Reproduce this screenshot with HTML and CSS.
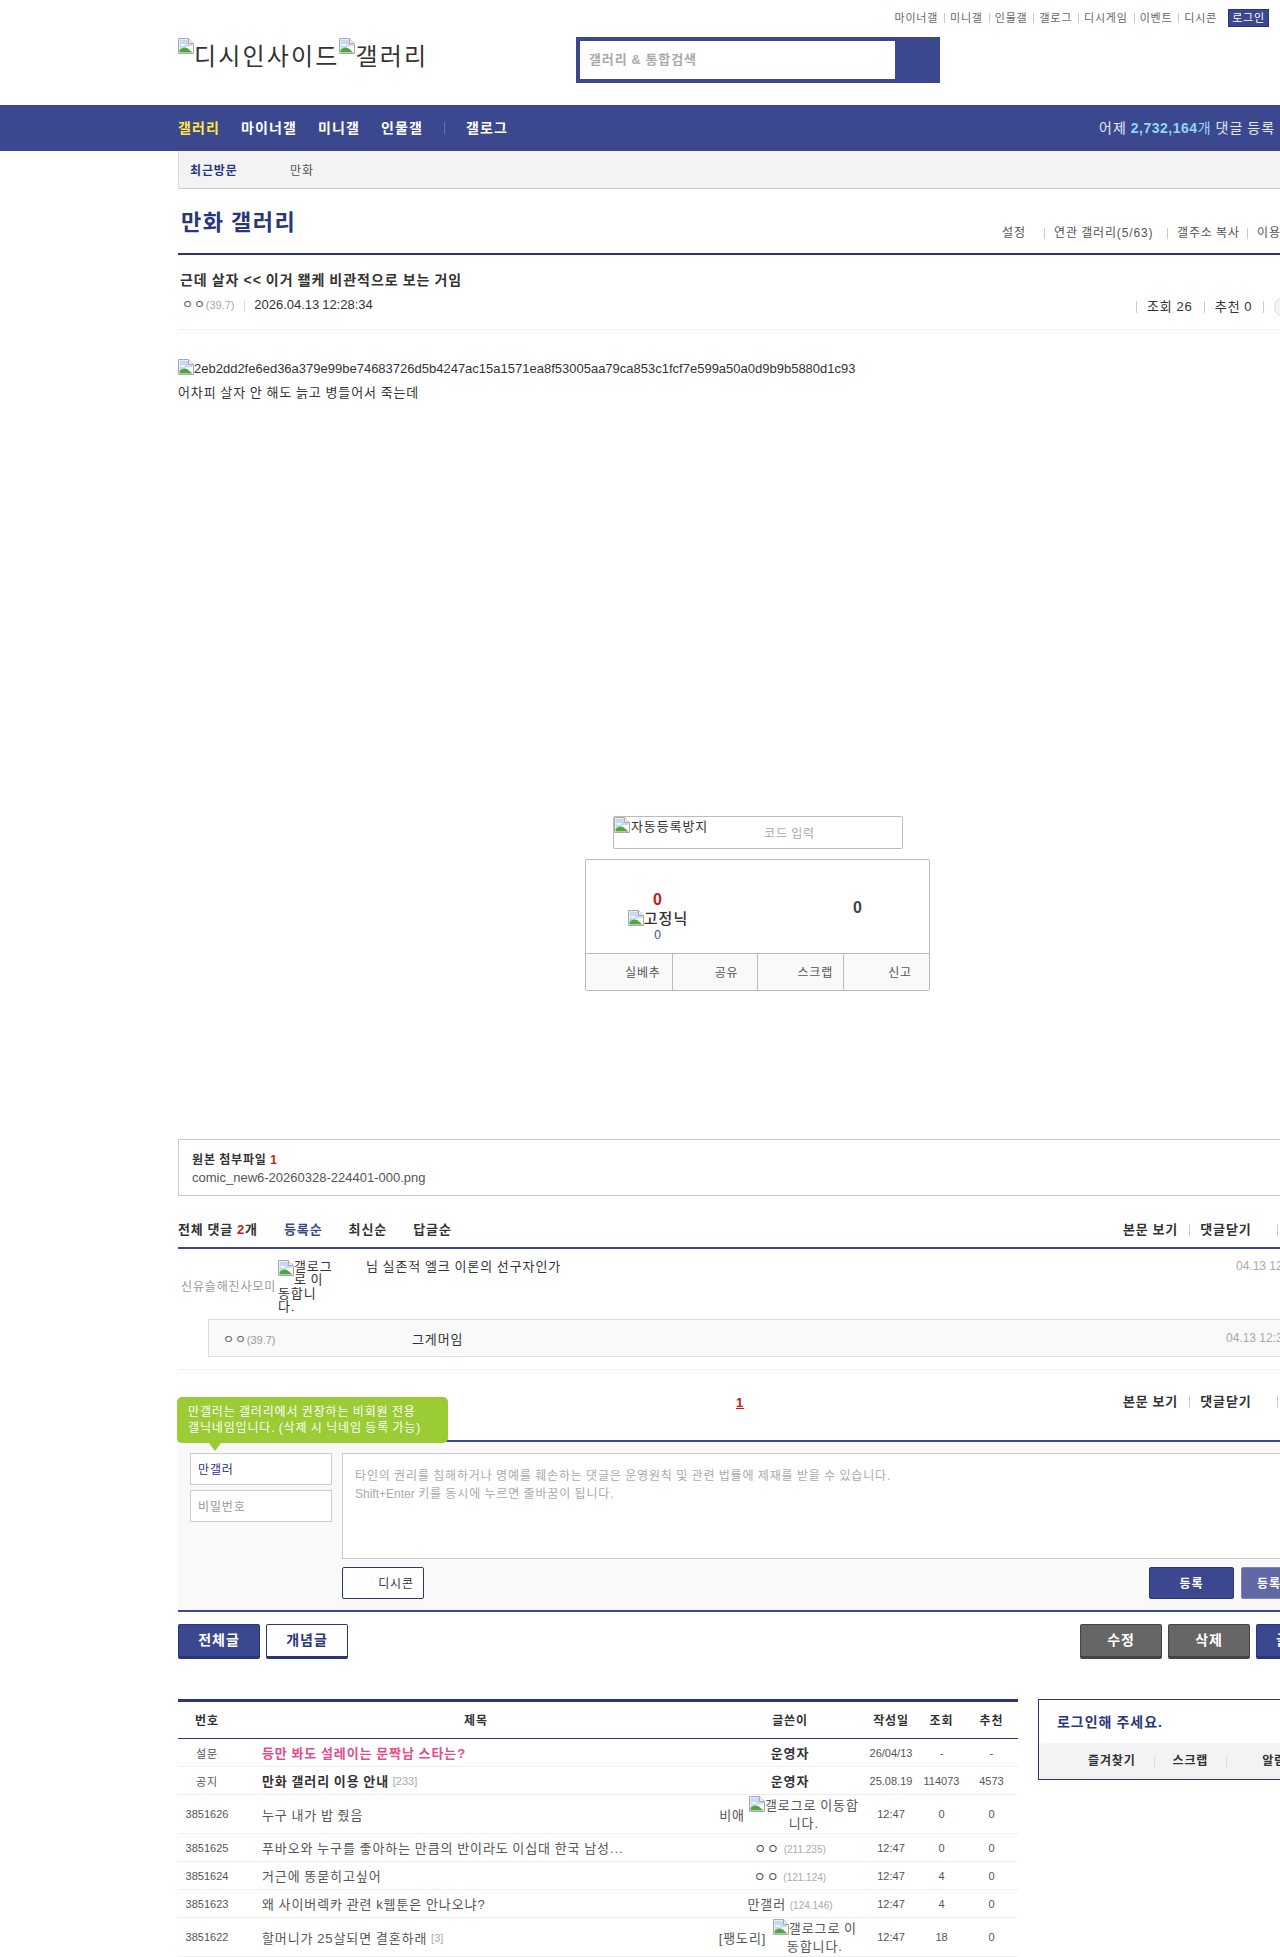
FILE: index.html
```html
<!DOCTYPE html>
<html lang="ko">
<head>
    <meta charset="UTF-8">
    <title>근데 살자 &lt;&lt; 이거 왤케 비관적으로 보는 거임 - 만화 갤러리</title>
    <link rel="stylesheet" href="styles.css">
</head>
<body>
    <svg class="defs" width="0" height="0">
        <symbol id="broken" viewBox="0 0 16 16">
            <path d="M0.5 0.5H10.5L15.5 5.5V15.5H0.5Z" fill="#fff" stroke="#a9a9a9"/>
            <path d="M10.5 0.5V5.5H15.5" fill="#eee" stroke="#a9a9a9"/>
            <path d="M1.5 1.5H10V6H14.5V8L8 8.5L1.5 12Z" fill="#c6d9f3"/>
            <path d="M1.5 14.5V12C4 9 8 8.5 11 11.5L14.5 14.5Z" fill="#4fa83d"/>
            <path d="M2 7C3.5 5.5 6 5.5 8 7L5 8Z" fill="#fff"/>
        </symbol>
    </svg>

    <header class="top">
        <div class="wrap">
            <ul class="top-links">
                <li>마이너갤</li>
                <li>미니갤</li>
                <li>인물갤</li>
                <li>갤로그</li>
                <li>디시게임</li>
                <li>이벤트</li>
                <li>디시콘</li>
            </ul>
            <a class="login-btn" href="#">로그인</a>
            <div class="logo-row">
                <div class="logo">
                    <svg class="broken"><use href="#broken"/></svg><span>디시인사이드</span><svg class="broken"><use href="#broken"/></svg><span>갤러리</span>
                </div>
                <form class="search">
                    <span class="search-input">갤러리 &amp; 통합검색</span>
                </form>
            </div>
        </div>
    </header>

    <nav class="gnb">
        <div class="wrap gnb-inner">
            <ul class="gnb-list">
                <li class="on">갤러리</li>
                <li>마이너갤</li>
                <li>미니갤</li>
                <li>인물갤</li>
                <li class="sep">갤로그</li>
            </ul>
            <p class="gnb-count">어제 <b>2,732,164</b><span class="sky">개</span> 댓글 등록</p>
        </div>
    </nav>

    <main class="wrap">
        <div class="recent">
            <strong>최근방문</strong>
            <span>만화</span>
        </div>

        <div class="gall-head">
            <h2>만화 갤러리</h2>
            <ul class="gall-links">
                <li class="l-set">설정</li>
                <li class="l-rel">연관 갤러리(5/63)</li>
                <li class="l-copy">갤주소 복사</li>
                <li class="l-use">이용</li>
            </ul>
        </div>

        <div class="post-head">
            <h3>근데 살자 &lt;&lt; 이거 왤케 비관적으로 보는 거임</h3>
            <div class="post-meta">
                <div class="writer">
                    <span class="nick">ㅇㅇ</span><span class="ip">(39.7)</span>
                    <span class="date">2026.04.13 12:28:34</span>
                </div>
                <div class="stats">
                    <span>조회 26</span>
                    <span>추천 0</span>
                    <i class="stat-bar"></i>
                    <i class="round"></i>
                </div>
            </div>
        </div>

        <div class="post-body">
            <p class="lat"><svg class="broken"><use href="#broken"/></svg>2eb2dd2fe6ed36a379e99be74683726d5b4247ac15a1571ea8f53005aa79ca853c1fcf7e599a50a0d9b9b5880d1c93</p>
            <p class="line2">어차피 살자 안 해도 늙고 병들어서 죽는데</p>

            <div class="captcha">
                <span class="captcha-alt"><svg class="broken"><use href="#broken"/></svg>자동등록방지</span>
                <span class="captcha-hint">코드 입력</span>
            </div>

            <div class="reco">
                <div class="reco-top">
                    <div class="reco-up">
                        <b class="up-num">0</b>
                        <span class="fix"><svg class="broken"><use href="#broken"/></svg>고정닉</span>
                        <span class="fix-num">0</span>
                    </div>
                    <b class="down-num">0</b>
                </div>
                <ul class="reco-btns">
                    <li>실베추</li>
                    <li>공유</li>
                    <li>스크랩</li>
                    <li>신고</li>
                </ul>
            </div>
        </div>

        <div class="attach">
            <strong>원본 첨부파일 <em>1</em></strong>
            <p class="lat">comic_new6-20260328-224401-000.png</p>
        </div>

        <div class="cmt-head">
            <div class="cmt-sort">
                <span class="total">전체 댓글 <em>2</em>개</span>
                <span class="cur">등록순</span>
                <span>최신순</span>
                <span>답글순</span>
            </div>
            <div class="cmt-opts">
                <span>본문 보기</span>
                <span class="bar">댓글닫기</span>
                <i class="bar-end"></i>
            </div>
        </div>

        <div class="cmt-row">
            <span class="cmt-nick">신유슬해진사모미</span>
            <span class="cmt-alt"><svg class="broken"><use href="#broken"/></svg>갤로그로 이동합니다.</span>
            <p class="cmt-text">님 실존적 엘크 이론의 선구자인가</p>
            <span class="cmt-date lat">04.13 12:29:10</span>
        </div>
        <div class="reply-wrap">
            <div class="reply">
                <span class="reply-nick">ㅇㅇ<small class="lat">(39.7)</small></span>
                <p>그게머임</p>
                <span class="cmt-date lat">04.13 12:31:44</span>
            </div>
        </div>

        <div class="cmt-foot">
            <a class="page-cur" href="#">1</a>
            <div class="cmt-opts">
                <span>본문 보기</span>
                <span class="bar">댓글닫기</span>
                <i class="bar-end"></i>
            </div>
        </div>

        <form class="cmt-form">
            <div class="tip">만갤러는 갤러리에서 권장하는 비회원 전용<br>갤닉네임입니다. (삭제 시 닉네임 등록 가능)</div>
            <div class="form-user">
                <span class="field name">만갤러</span>
                <span class="field">비밀번호</span>
            </div>
            <div class="form-main">
                <div class="textarea">타인의 권리를 침해하거나 명예를 훼손하는 댓글은 운영원칙 및 관련 법률에 제재를 받을 수 있습니다.<br><span class="lat">Shift+Enter</span> 키를 동시에 누르면 줄바꿈이 됩니다.</div>
                <div class="form-btns">
                    <button type="button" class="btn-dccon">디시콘</button>
                    <button type="button" class="btn-reg">등록</button>
                    <button type="button" class="btn-reg light">등록</button>
                </div>
            </div>
        </form>

        <div class="list-btns">
            <div class="btn-group">
                <a class="btn navy" href="#">전체글</a>
                <a class="btn white" href="#">개념글</a>
            </div>
            <div class="btn-group">
                <a class="btn gray" href="#">수정</a>
                <a class="btn gray" href="#">삭제</a>
                <a class="btn navy" href="#">글쓰기</a>
            </div>
        </div>

        <div class="list-area">
            <table class="list">
                <colgroup>
                    <col class="c-num"><col class="c-title"><col class="c-writer"><col class="c-date"><col class="c-view"><col class="c-reco">
                </colgroup>
                <thead>
                    <tr><th>번호</th><th>제목</th><th>글쓴이</th><th>작성일</th><th>조회</th><th>추천</th></tr>
                </thead>
                <tbody>
                    <tr class="r28">
                        <td class="kr">설문</td>
                        <td class="tit poll">등만 봐도 설레이는 문짝남 스타는?</td>
                        <td class="who"><b>운영자</b></td>
                        <td>26/04/13</td><td>-</td><td>-</td>
                    </tr>
                    <tr class="r28">
                        <td class="kr">공지</td>
                        <td class="tit"><b>만화 갤러리 이용 안내</b> <span class="reply-cnt">[233]</span></td>
                        <td class="who"><b>운영자</b></td>
                        <td>25.08.19</td><td>114073</td><td>4573</td>
                    </tr>
                    <tr class="r39">
                        <td>3851626</td>
                        <td class="tit">누구 내가 밥 줬음</td>
                        <td class="who"><div class="who-in"><span>비애</span><span class="who-alt a1"><svg class="broken"><use href="#broken"/></svg>갤로그로 이동합니다.</span></div></td>
                        <td>12:47</td><td>0</td><td>0</td>
                    </tr>
                    <tr class="r28">
                        <td>3851625</td>
                        <td class="tit">푸바오와 누구를 좋아하는 만큼의 반이라도 이십대 한국 남성...</td>
                        <td class="who">ㅇㅇ <span class="ip">(211.235)</span></td>
                        <td>12:47</td><td>0</td><td>0</td>
                    </tr>
                    <tr class="r28">
                        <td>3851624</td>
                        <td class="tit">거근에 똥묻히고싶어</td>
                        <td class="who">ㅇㅇ <span class="ip">(121.124)</span></td>
                        <td>12:47</td><td>4</td><td>0</td>
                    </tr>
                    <tr class="r28">
                        <td>3851623</td>
                        <td class="tit">왜 사이버렉카 관련 k웹툰은 안나오냐?</td>
                        <td class="who">만갤러 <span class="ip">(124.146)</span></td>
                        <td>12:47</td><td>4</td><td>0</td>
                    </tr>
                    <tr class="r39">
                        <td>3851622</td>
                        <td class="tit">할머니가 25살되면 결혼하래 <span class="reply-cnt">[3]</span></td>
                        <td class="who"><div class="who-in"><span>[팽도리]</span><span class="who-alt a2"><svg class="broken"><use href="#broken"/></svg>갤로그로 이동합니다.</span></div></td>
                        <td>12:47</td><td>18</td><td>0</td>
                    </tr>
                </tbody>
            </table>

            <aside class="login-box">
                <p>로그인해 주세요.</p>
                <ul>
                    <li>즐겨찾기</li>
                    <li>스크랩</li>
                    <li>알림</li>
                </ul>
            </aside>
        </div>
    </main>
</body>
</html>
```

FILE: styles.css
```css
* {
    margin: 0;
    padding: 0;
    box-sizing: border-box;
    letter-spacing: 0.07em; /* 한글 폭 맞춤 */
    word-spacing: -0.06em;
}

html, body {
    height: 1957px;
    overflow: hidden;
}

body {
    font-family: "Liberation Sans", "Noto Sans CJK KR", sans-serif;
    font-size: 13px;
    color: #333;
    background: #fff;
}

ul {
    list-style: none;
}

a {
    text-decoration: none;
    color: inherit;
}

em {
    font-style: normal;
    color: #c4200f;
}

.lat {
    letter-spacing: 0;
    word-spacing: 0;
}

.defs {
    position: absolute;
}

.broken {
    width: 16px;
    height: 16px;
    vertical-align: -2px;
}

.wrap {
    width: 1160px;
    margin-left: 178px;
}

/* 상단 */
.top {
    height: 105px;
}

.top .wrap {
    position: relative;
    padding-top: 9px;
}

.top-links {
    display: flex;
    width: 1039px;
    justify-content: flex-end;
    font-size: 11px;
    line-height: 18px;
    color: #666;
}

.top-links li + li {
    margin-left: 6px;
    padding-left: 6px;
    background: linear-gradient(#ccc, #ccc) left 4px / 1px 10px no-repeat;
}

.login-btn {
    position: absolute;
    left: 1050px;
    top: 9px;
    width: 41px;
    height: 18px;
    background: #3b4890;
    border: 1px solid #29367c;
    color: #fff;
    font-size: 11px;
    line-height: 17px;
    text-align: center;
}

.logo-row {
    display: flex;
    margin-top: 10px;
}

.logo {
    width: 398px;
    padding-top: 1px;
    font-size: 24px;
    line-height: 36px;
    color: #333;
    white-space: nowrap;
}

.logo span {
    letter-spacing: 0.09em;
}

.logo .broken {
    vertical-align: 11px;
}

.search {
    width: 364px;
    height: 46px;
    background: #3b4890;
    padding: 4px 45px 4px 4px;
}

.search-input {
    display: block;
    height: 38px;
    padding-left: 9px;
    background: #fff;
    font-size: 13px;
    font-weight: bold;
    line-height: 38px;
    color: #aaa;
}

/* 메뉴 */
.gnb {
    height: 46px;
    background: #3b4890;
    overflow: hidden;
}

.gnb-inner {
    display: flex;
    justify-content: space-between;
    width: 1097px;
    line-height: 46px;
}

.gnb-list {
    display: flex;
    gap: 21px;
    font-size: 14px;
    font-weight: bold;
    color: #fff;
}

.gnb-list li {
    letter-spacing: 0.08em;
}

.gnb-list .on {
    color: #ffe93b;
}

.gnb-list .sep {
    padding-left: 22px;
    background: linear-gradient(#6570ad, #6570ad) left center / 1px 12px no-repeat;
}

.gnb-count {
    font-size: 14px;
    color: #e6e9f5;
    white-space: nowrap;
}

.gnb-count b,
.sky {
    color: #8fd6f4;
}

.gnb-count b {
    font-weight: bold;
    letter-spacing: 0.5px;
}

/* 최근 방문 */
.recent {
    display: flex;
    height: 38px;
    align-items: center;
    padding-left: 11px;
    background: #f3f3f3;
    border-left: 1px solid #ddd;
    border-bottom: 1px solid #ccc;
    font-size: 12px;
}

.recent strong {
    width: 100px;
    color: #29367c;
}

.recent span {
    color: #555;
}

/* 갤러리 제목 */
.gall-head {
    display: flex;
    height: 66px;
    padding-top: 18px;
    border-bottom: 2px solid #29367c;
}

.gall-head h2 {
    flex: none;
    width: 824px;
    padding-left: 3px;
    font-size: 22px;
    font-weight: bold;
    line-height: 32px;
    color: #29367c;
}

.gall-links {
    display: flex;
    margin-top: 18px;
    font-size: 12px;
    line-height: 16px;
    color: #555;
    white-space: nowrap;
}

.gall-links li + li {
    background: linear-gradient(#ccc, #ccc) left 3px / 1px 11px no-repeat;
}

.l-set { width: 42px; }
.l-rel { width: 123px; padding-left: 10px; }
.l-copy { width: 80px; padding-left: 10px; }
.l-use { padding-left: 10px; }

/* 글 제목 */
.post-head {
    height: 75px;
    padding: 16px 0 0 2px;
    border-bottom: 1px solid #eee;
}

.post-head h3 {
    font-size: 14px;
    font-weight: bold;
    line-height: 18px;
}

.post-meta {
    display: flex;
    margin-top: 7px;
    height: 24px;
}

.writer {
    flex: none;
    width: 956px;
    padding-left: 2px;
    line-height: 18px;
    color: #555;
}

.nick {
    font-size: 12px;
}

.ip {
    font-size: 11px;
    letter-spacing: 0;
    color: #aaa;
}

.date {
    margin-left: 6px;
    padding-left: 10px;
    background: linear-gradient(#ddd, #ddd) left 3px / 1px 12px no-repeat;
    color: #333;
    letter-spacing: 0;
}

.stats {
    display: flex;
    align-items: center;
    height: 24px;
    margin-top: -1px;
    line-height: 24px;
    white-space: nowrap;
}

.stats span {
    margin-right: 11px;
    padding-left: 11px;
    background: linear-gradient(#ccc, #ccc) left 6px / 1px 12px no-repeat;
}

.stat-bar {
    width: 1px;
    height: 12px;
    background: #ccc;
}

.round {
    flex: none;
    width: 44px;
    height: 22px;
    margin-left: 10px;
    border: 1px solid #ddd;
    border-radius: 11px;
    background: #f3f3f3;
}

/* 본문 */
.post-body {
    padding-top: 29px;
    line-height: 18px;
}

.post-body > p {
    height: 18px;
}

.line2 {
    margin-top: 7px;
}

.captcha {
    display: flex;
    width: 290px;
    height: 33px;
    margin: 414px 0 10px 435px;
    border: 1px solid #bbb;
    border-radius: 2px;
    line-height: 18px;
}

.captcha .broken {
    margin-right: 1px;
}

.captcha-alt {
    width: 150px;
    font-size: 13px;
}

.captcha-hint {
    padding-top: 8px;
    font-size: 12px;
    color: #aaa;
}

.reco {
    width: 345px;
    height: 132px;
    margin-left: 407px;
    border: 1px solid #bbb;
    border-radius: 2px;
}

.reco-top {
    display: flex;
    height: 93px;
}

.reco-up {
    display: flex;
    flex-direction: column;
    align-items: center;
    width: 144px;
    padding-top: 30px;
}

.up-num {
    font-size: 16px;
    line-height: 20px;
    color: #c4200f;
}

.fix {
    margin-top: -1px;
    font-size: 15px;
    font-weight: 500;
    line-height: 20px;
    white-space: nowrap;
}

.fix-num {
    margin-top: -2px;
    font-size: 12px;
    line-height: 16px;
    color: #3b4890;
}

.down-num {
    margin: 38px 0 0 123px;
    font-size: 16px;
    line-height: 20px;
    color: #444;
}

.reco-btns {
    display: flex;
    height: 37px;
    border-top: 1px solid #bbb;
    background: #f9f9f9;
    font-size: 12px;
    line-height: 39px;
    color: #555;
}

.reco-btns li {
    width: 86px;
    padding-left: 39px;
}

.reco-btns li + li {
    border-left: 1px solid #bbb;
}

.reco-btns li:nth-child(2) {
    padding-left: 42px;
}

.reco-btns li:nth-child(4) {
    padding-left: 44px;
}

/* 첨부파일 */
.attach {
    height: 57px;
    margin-top: 148px;
    padding: 11px 13px;
    border: 1px solid #ccc;
    line-height: 18px;
    font-size: 13px;
}

.attach strong {
    font-size: 12px;
}

.attach p {
    color: #555;
    font-size: 13px;
}

.attach em {
    font-weight: bold;
}

/* 댓글 */
.cmt-head {
    display: flex;
    justify-content: space-between;
    height: 53px;
    padding-top: 25px;
    border-bottom: 2px solid #3b4890;
    line-height: 18px;
}

.cmt-sort {
    display: flex;
    font-weight: bold;
    white-space: nowrap;
}

.cmt-sort span {
    margin-left: 26px;
}

.cmt-sort .total {
    margin-left: 0;
}

.cmt-sort .cur {
    color: #3b4890;
}

.cmt-opts {
    display: flex;
    width: 215px;
    font-weight: bold;
    white-space: nowrap;
    flex: none;
}

.cmt-opts .bar {
    margin-left: 11px;
    padding-left: 11px;
    background: linear-gradient(#ccc, #ccc) left 3px / 1px 12px no-repeat;
}

.bar-end {
    width: 1px;
    height: 12px;
    margin: 3px 0 0 25px;
    background: #ccc;
}

.cmt-row {
    display: grid;
    grid-template-columns: 97px 88px 870px 1fr;
    height: 70px;
    padding: 11px 0 0 3px;
    font-size: 13px;
    line-height: 14px;
}

.cmt-nick {
    align-self: start;
    margin-top: 20px;
    font-size: 12px;
    color: #999;
    white-space: nowrap;
}

.cmt-alt {
    width: 55px;
    font-size: 13px;
    line-height: 13.4px;
}

.cmt-alt .broken {
    float: left;
}

.cmt-date {
    font-size: 12px;
    color: #aaa;
    white-space: nowrap;
}

.cmt-row .cmt-date {
    margin-top: -1px;
}

.reply-wrap {
    padding: 0 0 12px 30px;
    border-bottom: 1px solid #eee;
}

.reply {
    display: grid;
    grid-template-columns: 189px 814px 1fr;
    align-items: center;
    height: 38px;
    padding-left: 14px;
    background: #f9f9f9;
    border: 1px solid #ddd;
    border-right: 0;
}

.reply-nick {
    font-size: 12px;
    color: #666;
}

.reply-nick small {
    font-size: 11px;
    color: #999;
}

.cmt-foot {
    display: flex;
    height: 70px;
    padding-top: 23px;
    line-height: 18px;
}

.page-cur {
    width: 945px;
    padding: 1px 0 0 558px;
    font-weight: bold;
    color: #c4200f;
    text-decoration: underline;
}

.cmt-form {
    position: relative;
    display: flex;
    height: 172px;
    padding: 11px 0 0 12px;
    background: #f9f9f9;
    border-top: 2px solid #3b4890;
    border-bottom: 2px solid #3b4890;
}

.tip {
    position: absolute;
    left: -1px;
    top: -45px;
    width: 271px;
    height: 46px;
    padding: 7px 11px;
    border-radius: 5px;
    background: #9bcb35;
    color: #fff;
    font-size: 12px;
    line-height: 16px;
    white-space: nowrap;
}

.tip::after {
    content: "";
    position: absolute;
    left: 32px;
    top: 46px;
    border: 6px solid transparent;
    border-top: 8px solid #9bcb35;
    border-bottom: 0;
}

.form-user {
    display: flex;
    flex-direction: column;
    gap: 5px;
    width: 152px;
}

.field {
    width: 142px;
    height: 32px;
    padding-left: 7px;
    background: #fff;
    border: 1px solid #ccc;
    font-size: 12px;
    line-height: 32px;
    color: #999;
}

.field.name {
    color: #29367c;
}

.form-main {
    flex: 1;
}

.textarea {
    height: 106px;
    padding: 13px 12px;
    background: #fff;
    border: 1px solid #ccc;
    border-right: 0;
    font-size: 12px;
    line-height: 18px;
    color: #aaa;
}

.form-btns {
    display: flex;
    gap: 7px;
    margin-top: 8px;
}

.form-btns button {
    flex: none;
    height: 32px;
    padding-bottom: 2px;
    border-radius: 2px;
    font-family: inherit;
    font-size: 12px;
    font-weight: bold;
}

.btn-dccon {
    width: 82px;
    margin-right: 718px;
    padding-left: 26px;
    background: #fff;
    border: 1px solid #29367c;
    color: #333;
    font-weight: normal !important;
}

.btn-reg {
    width: 85px;
    background: #3b4890;
    border: 1px solid #29367c;
    color: #fff;
}

.btn-reg.light {
    padding-left: 15px;
    text-align: left;
    background: #6068a5;
    border-color: #7d85b8;
}

.list-btns {
    display: flex;
    justify-content: space-between;
    width: 1160px;
    margin-top: 12px;
}

.btn-group {
    display: flex;
    gap: 6px;
}

.btn {
    display: block;
    width: 82px;
    height: 35px;
    border: 1px solid #29367c;
    border-bottom-width: 3px;
    border-radius: 2px;
    font-size: 14px;
    font-weight: bold;
    line-height: 30px;
    text-align: center;
}

.btn.navy {
    background: #3b4890;
    color: #fff;
}

.btn.white {
    background: #fff;
    color: #29367c;
}

.btn.gray {
    background: #666;
    border-color: #444;
    color: #fff;
}

/* 글 목록 */
.list-area {
    display: flex;
    margin-top: 40px;
}

.list {
    flex: none;
    width: 840px;
    align-self: flex-start;
    border-collapse: collapse;
    table-layout: fixed;
    font-size: 11px;
    border-top: 3px solid #29367c;
}

.c-num { width: 58px; }
.c-title { width: 480px; }
.c-writer { width: 148px; }
.c-date { width: 54px; }
.c-view { width: 47px; }
.c-reco { width: 53px; }

.list th {
    height: 38px;
    padding-bottom: 2px;
    border-bottom: 1px solid #29367c;
    font-size: 12px;
    font-weight: bold;
}

.list td {
    border-bottom: 1px solid #eee;
    text-align: center;
    color: #555;
    white-space: nowrap;
    letter-spacing: 0;
}

.list .r28 td {
    height: 28px;
}

.list .r39 td {
    height: 39px;
}

.list td.kr {
    font-size: 11px;
    letter-spacing: 0.07em;
}

.list td.tit {
    padding-left: 26px;
    text-align: left;
    font-size: 13px;
    letter-spacing: 0.07em;
}

.list td.tit b {
    color: #333;
}

.list td.poll {
    color: #e54c8e;
    font-weight: bold;
}

.reply-cnt {
    position: relative;
    top: -1px;
    font-size: 11px;
    letter-spacing: 0;
    color: #aaa;
}

.list td.who {
    font-size: 13px;
    letter-spacing: 0.07em;
}

.who b {
    color: #333;
}

.who .ip {
    font-size: 10px;
}

.who-in {
    display: flex;
    align-items: center;
    justify-content: center;
}

.who-alt {
    display: block;
    flex: none;
    margin-left: 2px;
    white-space: normal;
    line-height: 18px;
}

.a1 { width: 114px; }
.a2 { width: 93px; }

.login-box {
    flex: none;
    width: 300px;
    height: 81px;
    margin-left: 20px;
    border: 1px solid #29367c;
    border-right: 0;
    white-space: nowrap;
}

.login-box p {
    height: 43px;
    padding-left: 18px;
    font-size: 14px;
    font-weight: bold;
    line-height: 44px;
    color: #29367c;
}

.login-box ul {
    display: flex;
    height: 36px;
    background: #f3f3f3;
    padding-left: 49px;
    font-size: 12px;
    font-weight: bold;
    line-height: 36px;
}

.login-box li {
    padding-right: 18px;
}

.login-box li + li {
    padding-left: 19px;
    background: linear-gradient(#ddd, #ddd) left center / 1px 11px no-repeat;
}

.login-box li:last-child {
    padding-left: 36px;
}
```
